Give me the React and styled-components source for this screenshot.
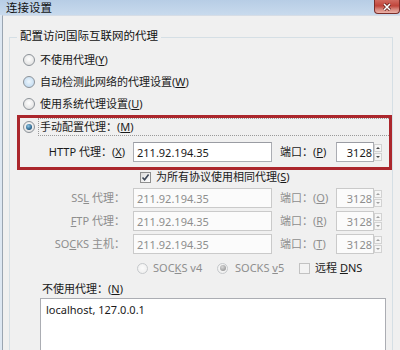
import React from "react";
import styled, {createGlobalStyle} from "styled-components";

const GlobalStyle = createGlobalStyle`
  html, body {
    margin: 0;
    padding: 0;
    background: #f0f0f0;
  }
  body {
    font-family: "Noto Sans", "Noto Sans CJK SC", sans-serif;
    font-size: 11px;
    color: #1c1c1c;
  }
`;

const Window = styled.div`
  width: 400px;
  height: 350px;
  overflow: hidden;
  display: flex;
  flex-direction: column;
  background: #dde7f2;
`;

const TitleBar = styled.div`
  height: 15px;
  display: flex;
  align-items: center;
  background: linear-gradient(to bottom, #b7cde5, #c8daed);
`;

const Title = styled.span`
  padding-left: 6px;
  font-family: "Noto Sans CJK SC", sans-serif;
  font-size: 11.5px;
  line-height: 15px;
  color: #111;
`;

const CloseButton = styled.div`
  margin-left: auto;
  align-self: flex-start;
  width: 24px;
  height: 13px;
  border: 1px solid #7a2e29;
  border-top: none;
  border-radius: 0 0 4px 4px;
  background: linear-gradient(to bottom, #d06a60, #c0443a 45%, #d6847a 70%, #ebb2a8);
  display: flex;
  align-items: center;
  justify-content: center;
`;

const Band = styled.div`
  height: 2px;
  background: #e6eef6;
`;

const Client = styled.div`
  flex: 1;
  margin-left: 2px;
  border-left: 1px solid #9aa5b1;
  border-top: 1px solid #d6dde6;
  background: #f0f0f0;
  display: flex;
  flex-direction: column;
`;

const Group = styled.fieldset`
  margin: 12px 0 0 6px;
  width: 384px;
  box-sizing: border-box;
  min-width: 0;
  border: 1px solid #d5dfe5;
  border-bottom: none;
  padding: 3px 0 0 7px;
  display: flex;
  flex-direction: column;
  flex: 1;
`;

const Legend = styled.legend`
  padding: 0 3px 4px;
  font-family: "Noto Sans CJK SC", sans-serif;
  font-size: 11.5px;
  line-height: 14px;
  color: #111;
`;

const Key = styled.u`
  text-underline-offset: 1px;
`;

const Text = styled.span`
  font-family: "Noto Sans", "Noto Sans CJK SC", sans-serif;
  font-size: 11px;
  line-height: 14px;
  white-space: nowrap;
  color: ${(p) => (p.$disabled ? "#8e8e8e" : "#1a1a1a")};
`;

const RadioRow = styled.div`
  height: 22px;
  display: flex;
  align-items: center;
  gap: 5px;
  padding-left: 6px;
`;

const RadioDot = styled.span`
  width: 12px;
  height: 12px;
  box-sizing: border-box;
  border-radius: 50%;
  flex: none;
  display: flex;
  align-items: center;
  justify-content: center;
  border: 1px solid ${(p) => (p.$disabled ? "#c6c9cc" : "#8c9298")};
  background: ${(p) =>
    p.$hover
      ? "radial-gradient(circle at 50% 45%, #eef6fc, #b6d4ee)"
      : p.$disabled
      ? "radial-gradient(circle at 50% 45%, #fbfbfb, #ececec)"
      : "radial-gradient(circle at 50% 40%, #ffffff, #d9d9d9)"};
  &::after {
    content: "";
    width: 6px;
    height: 6px;
    border-radius: 50%;
    display: ${(p) => (p.$checked ? "block" : "none")};
    background: ${(p) =>
      p.$disabled
        ? "radial-gradient(circle at 40% 35%, #d8d8d8, #9a9a9a 75%)"
        : "radial-gradient(circle at 40% 35%, #8fc6e6, #1d5780 72%)"};
  }
`;

const RedBox = styled.div`
  border: 3px solid #ab262c;
  display: flex;
  flex-direction: column;
  padding-bottom: 5px;
`;

const ManualRow = styled.div`
  height: 18px;
  display: flex;
  align-items: center;
  padding-left: 3px;
  gap: 3px;
`;

const FocusRect = styled.div`
  flex: 1;
  height: 18px;
  box-sizing: border-box;
  border: 1px dotted #9a9a9a;
  border-right: none;
  display: flex;
  align-items: center;
  padding-left: 1px;
`;

const ProxyRow = styled.div`
  height: 20px;
  margin-top: ${(p) => p.$mt}px;
  display: grid;
  grid-template-columns: ${(p) => p.$labelWidth}px 139px 48px 46px;
  column-gap: 8px;
  align-items: center;
`;

const RowLabel = styled(Text)`
  text-align: right;
`;

const Field = styled.input`
  height: 20px;
  width: 100%;
  box-sizing: border-box;
  margin: 0;
  padding: 0 3px;
  font-family: "Noto Sans", sans-serif;
  font-size: 11px;
  color: #1a1a1a;
  background: #fff;
  border: 1px solid #abadb3;
  border-top-color: #9a9ca3;
  outline: none;
  &:disabled {
    color: #8e8e8e;
    background: #fbfbfb;
    border-color: #cacaca;
  }
`;

const PortBox = styled.div`
  display: flex;
  height: 20px;
`;

const PortField = styled(Field)`
  width: 38px;
  text-align: right;
  padding: 0 1px 0 0;
`;

const Spinner = styled.div`
  width: 8px;
  display: flex;
  flex-direction: column;
  justify-content: center;
  gap: 1px;
`;

const SpinHalf = styled.div`
  height: 8px;
  box-sizing: border-box;
  border: 1px solid #d2d2d2;
  background: #f6f6f6;
  display: flex;
  align-items: center;
  justify-content: center;
  &::after {
    content: "";
    border-left: 2px solid transparent;
    border-right: 2px solid transparent;
    ${(p) => (p.$down ? "border-top" : "border-bottom")}: 2px solid
      ${(p) => (p.$disabled ? "#a0a0a0" : "#4a4a4a")};
  }
`;

const CheckRow = styled.div`
  height: 14px;
  display: flex;
  align-items: center;
  gap: 5px;
  padding-left: ${(p) => p.$indent}px;
`;

const CheckBox = styled.span`
  width: 11px;
  height: 11px;
  box-sizing: border-box;
  flex: none;
  border: 1px solid ${(p) => (p.$disabled ? "#c2c2c2" : "#8e8f8f")};
  background: ${(p) =>
    p.$disabled ? "#f3f3f3" : "linear-gradient(135deg, #dcdcdc, #ffffff)"};
  display: flex;
  align-items: center;
  justify-content: center;
`;

const OptionsRow = styled.div`
  height: 20px;
  margin-top: 4px;
  padding-left: 120px;
  display: flex;
  align-items: center;
`;

const Option = styled.div`
  width: ${(p) => p.$w}px;
  display: flex;
  align-items: center;
  gap: ${(p) => p.$gap}px;
`;

const SmallRadio = styled(RadioDot)`
  width: 11px;
  height: 11px;
`;

const BypassLabel = styled.div`
  height: 16px;
  margin-top: 3px;
  padding-left: 25px;
  display: flex;
  align-items: center;
`;

const BypassArea = styled.textarea`
  margin: 1px 0 0 23px;
  width: 346px;
  height: 70px;
  flex: none;
  box-sizing: border-box;
  resize: none;
  padding: 4px 5px;
  font-family: "Noto Sans", sans-serif;
  font-size: 11px;
  line-height: 14px;
  color: #1a1a1a;
  border: 1px solid #abadb3;
  background: #fff;
  outline: none;
`;

const Port = ({value, disabled}) => (
  <PortBox>
    <PortField value={value} disabled={disabled} readOnly />
    <Spinner>
      <SpinHalf $disabled={disabled} />
      <SpinHalf $down $disabled={disabled} />
    </Spinner>
  </PortBox>
);

const CheckMark = () => (
  <svg width="9" height="9" viewBox="0 0 9 9">
    <path d="M1.5 4.5 L3.6 6.8 L7.6 1.6" fill="none" stroke="#3c4656" strokeWidth="1.6" />
  </svg>
);

export default function App() {
  const ip = "211.92.194.35";
  return (
    <Window>
      <GlobalStyle />
      <TitleBar>
        <Title>连接设置</Title>
        <CloseButton>
          <svg width="10" height="8" viewBox="0 0 10 8">
            <path d="M2 1 L8 7 M8 1 L2 7" stroke="#5a1c18" strokeWidth="3" />
            <path d="M2 1 L8 7 M8 1 L2 7" stroke="#fff" strokeWidth="1.6" />
          </svg>
        </CloseButton>
      </TitleBar>
      <Band />
      <Client>
        <Group>
          <Legend>配置访问国际互联网的代理</Legend>
          <RadioRow>
            <RadioDot />
            <Text>不使用代理(<Key>Y</Key>)</Text>
          </RadioRow>
          <RadioRow>
            <RadioDot $hover />
            <Text>自动检测此网络的代理设置(<Key>W</Key>)</Text>
          </RadioRow>
          <RadioRow>
            <RadioDot />
            <Text>使用系统代理设置(<Key>U</Key>)</Text>
          </RadioRow>
          <RedBox>
            <ManualRow>
              <RadioDot $checked />
              <FocusRect>
                <Text>手动配置代理：(<Key>M</Key>)</Text>
              </FocusRect>
            </ManualRow>
            <ProxyRow $labelWidth={105} $mt={6}>
              <RowLabel>HTTP 代理：(<Key>X</Key>)</RowLabel>
              <Field value={ip} readOnly />
              <Text>端口：(<Key>P</Key>)</Text>
              <Port value="3128" />
            </ProxyRow>
          </RedBox>
          <CheckRow $indent={123}>
            <CheckBox>
              <CheckMark />
            </CheckBox>
            <Text>为所有协议使用相同代理(<Key>S</Key>)</Text>
          </CheckRow>
          <ProxyRow $labelWidth={108} $mt={4}>
            <RowLabel $disabled>SS<Key>L</Key> 代理：</RowLabel>
            <Field value={ip} disabled readOnly />
            <Text $disabled>端口：(<Key>O</Key>)</Text>
            <Port value="3128" disabled />
          </ProxyRow>
          <ProxyRow $labelWidth={108} $mt={3}>
            <RowLabel $disabled><Key>F</Key>TP 代理：</RowLabel>
            <Field value={ip} disabled readOnly />
            <Text $disabled>端口：(<Key>R</Key>)</Text>
            <Port value="3128" disabled />
          </ProxyRow>
          <ProxyRow $labelWidth={108} $mt={3}>
            <RowLabel $disabled>SO<Key>C</Key>KS 主机：</RowLabel>
            <Field value={ip} disabled readOnly />
            <Text $disabled>端口：(<Key>T</Key>)</Text>
            <Port value="3128" disabled />
          </ProxyRow>
          <OptionsRow>
            <Option $w={80} $gap={5}>
              <SmallRadio $disabled />
              <Text $disabled>SOC<Key>K</Key>S v4</Text>
            </Option>
            <Option $w={82} $gap={7}>
              <SmallRadio $disabled $checked />
              <Text $disabled>SOCKS <Key>v</Key>5</Text>
            </Option>
            <Option $w={80} $gap={5}>
              <CheckBox $disabled />
              <Text>远程 <Key>D</Key>NS</Text>
            </Option>
          </OptionsRow>
          <BypassLabel>
            <Text>不使用代理：(<Key>N</Key>)</Text>
          </BypassLabel>
          <BypassArea defaultValue="localhost, 127.0.0.1" />
        </Group>
      </Client>
    </Window>
  );
}
